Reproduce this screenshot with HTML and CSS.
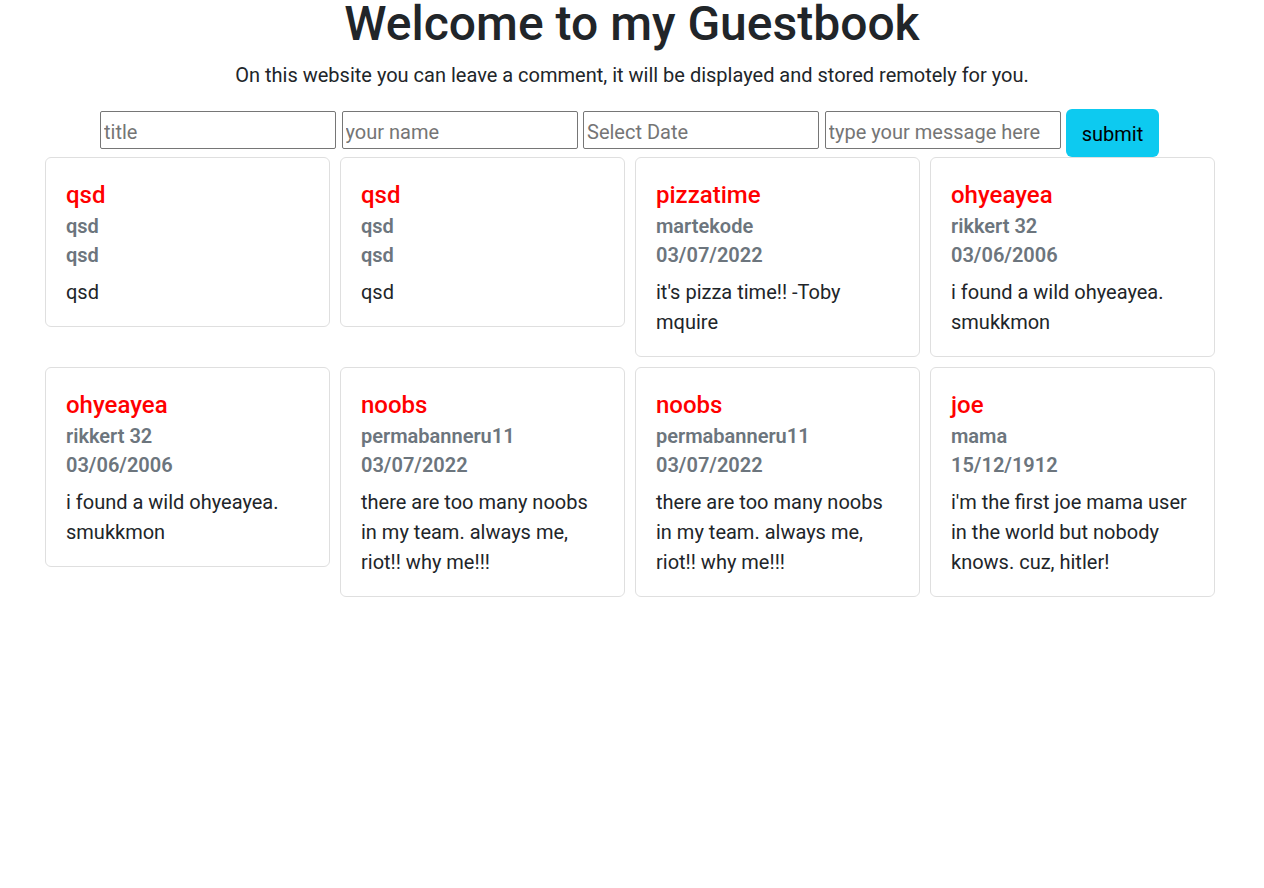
FILE: index.html
```html
<!DOCTYPE html>
<html lang="en">
<head>
<meta charset="utf-8">
<title>Guestbook</title>
<link rel="stylesheet" href="styles.css">
</head>
<body>
<header class="intro">
  <h1 class="intro-title">Welcome to my Guestbook</h1>
  <p class="intro-lead">On this website you can leave a comment, it will be displayed and stored remotely for you.</p>
</header>
<form class="entry-form">
  <input class="entry-input" type="text" placeholder="title">
  <input class="entry-input" type="text" placeholder="your name">
  <input class="entry-input" type="text" placeholder="Select Date">
  <input class="entry-input" type="text" placeholder="type your message here">
  <button class="entry-submit" type="button">submit</button>
</form>
<main class="cards">
  <article class="card">
    <h5 class="card-title">qsd</h5>
    <h6 class="card-sub">qsd</h6>
    <h6 class="card-sub">qsd</h6>
    <p class="card-text">qsd</p>
  </article>
  <article class="card">
    <h5 class="card-title">qsd</h5>
    <h6 class="card-sub">qsd</h6>
    <h6 class="card-sub">qsd</h6>
    <p class="card-text">qsd</p>
  </article>
  <article class="card">
    <h5 class="card-title">pizzatime</h5>
    <h6 class="card-sub">martekode</h6>
    <h6 class="card-sub">03/07/2022</h6>
    <p class="card-text">it's pizza time!! -Toby mquire</p>
  </article>
  <article class="card">
    <h5 class="card-title">ohyeayea</h5>
    <h6 class="card-sub">rikkert 32</h6>
    <h6 class="card-sub">03/06/2006</h6>
    <p class="card-text">i found a wild ohyeayea. smukkmon</p>
  </article>
  <article class="card">
    <h5 class="card-title">ohyeayea</h5>
    <h6 class="card-sub">rikkert 32</h6>
    <h6 class="card-sub">03/06/2006</h6>
    <p class="card-text">i found a wild ohyeayea. smukkmon</p>
  </article>
  <article class="card">
    <h5 class="card-title">noobs</h5>
    <h6 class="card-sub">permabanneru11</h6>
    <h6 class="card-sub">03/07/2022</h6>
    <p class="card-text">there are too many noobs in my team. always me, riot!! why me!!!</p>
  </article>
  <article class="card">
    <h5 class="card-title">noobs</h5>
    <h6 class="card-sub">permabanneru11</h6>
    <h6 class="card-sub">03/07/2022</h6>
    <p class="card-text">there are too many noobs in my team. always me, riot!! why me!!!</p>
  </article>
  <article class="card">
    <h5 class="card-title">joe</h5>
    <h6 class="card-sub">mama</h6>
    <h6 class="card-sub">15/12/1912</h6>
    <p class="card-text">i'm the first joe mama user in the world but nobody knows. cuz, hitler!</p>
  </article>
</main>
</body>
</html>
```
FILE: styles.css
```css
* { box-sizing: border-box; }

body {
  margin: 0;
  font-family: Roboto, "Liberation Sans", sans-serif;
  font-size: 20px;
  line-height: 1.5;
  color: #212529;
  background: #fff;
}

.intro {
  text-align: center;
}

.intro-title {
  margin: 0;
  font-size: 48px;
  font-weight: 500;
  line-height: 48px;
}

.intro-lead {
  margin: 12px 0 0;
  font-size: 20px;
  line-height: 30px;
}

.entry-form {
  display: flex;
  justify-content: center;
  align-items: flex-start;
  gap: 5.5px;
  margin: 19px 5px 0 0;
}

.entry-input {
  width: 236px;
  height: 38px;
  margin-top: 2px;
  padding: 3px 3px 0;
  border: 1px solid #767676;
  border-radius: 2px;
  font-family: inherit;
  font-size: 20px;
  color: #212529;
  background: #fff;
}

.entry-input::placeholder {
  color: #757575;
}

.entry-submit {
  width: 93px;
  height: 48px;
  padding: 2px 0 0;
  border: 0;
  border-radius: 6px;
  background: #0dcaf0;
  color: #000;
  font-family: inherit;
  font-size: 20px;
  line-height: 1.5;
}

.cards {
  display: flex;
  flex-wrap: wrap;
  align-items: flex-start;
  gap: 10px;
  padding-left: 45px;
}

.card {
  width: 285px;
  padding: 20px 20px 19px;
  border: 1px solid #dfdfdf;
  border-radius: 6px;
  background: #fff;
}

.card-title {
  margin: 3px 0 2px;
  font-size: 24px;
  font-weight: 500;
  line-height: 29px;
  color: #ff0000;
}

.card-sub {
  margin: 0;
  font-size: 20px;
  font-weight: 600;
  line-height: 29px;
  color: #6c757d;
}

.card-text {
  margin: 7px 0 0;
  font-size: 20px;
  line-height: 30px;
}
```
